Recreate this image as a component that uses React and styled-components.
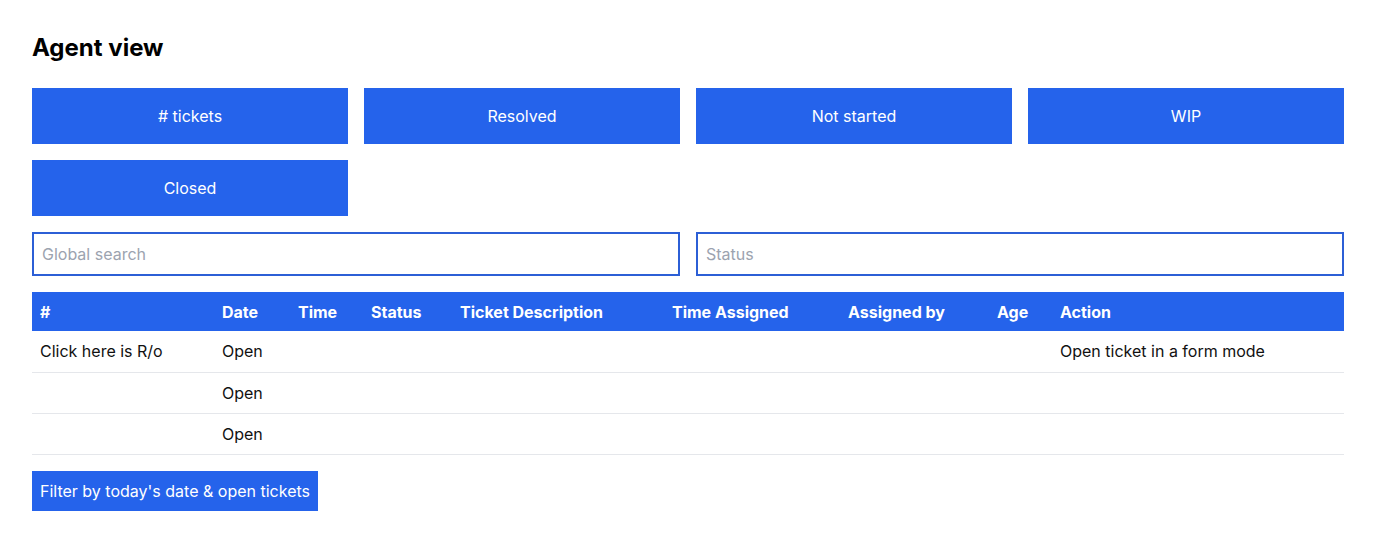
import React from 'react'
import styled, { createGlobalStyle } from 'styled-components'

const GlobalStyle = createGlobalStyle`
	body {
		margin: 0;
		background: #fff;
		font-family: Inter, "Liberation Sans", sans-serif;
		color: #111;
	}
	* { box-sizing: border-box; }
`

const stats = ['# tickets', 'Resolved', 'Not started', 'WIP', 'Closed']

const columns = [
	{ label: '#', width: 182 },
	{ label: 'Date', width: 76 },
	{ label: 'Time', width: 73 },
	{ label: 'Status', width: 89 },
	{ label: 'Ticket Description', width: 212 },
	{ label: 'Time Assigned', width: 176 },
	{ label: 'Assigned by', width: 149 },
	{ label: 'Age', width: 63 },
	{ label: 'Action', width: 292 },
]

const rows = [
	['Click here is R/o', 'Open', '', '', '', '', '', '', 'Open ticket in a form mode'],
	['', 'Open', '', '', '', '', '', '', ''],
	['', 'Open', '', '', '', '', '', '', ''],
]

export default function App() {
	return (
		<Page>
			<GlobalStyle />
			<Title>Agent view</Title>
			<StatGrid>
				{stats.map(s => (
					<StatButton key={s}>{s}</StatButton>
				))}
			</StatGrid>
			<Filters>
				<SearchInput placeholder="Global search" />
				<SearchInput placeholder="Status" />
			</Filters>
			<Table>
				<colgroup>
					{columns.map(c => (
						<col key={c.label} style={{ width: c.width }} />
					))}
				</colgroup>
				<thead>
					<tr>
						{columns.map(c => (
							<Th key={c.label}>{c.label}</Th>
						))}
					</tr>
				</thead>
				<tbody>
					{rows.map((r, i) => (
						<Tr key={i}>
							{r.map((cell, j) => (
								<Td key={j}>{cell}</Td>
							))}
						</Tr>
					))}
				</tbody>
			</Table>
			<ActionRow>
				<FilterButton>Filter by today's date &amp; open tickets</FilterButton>
			</ActionRow>
		</Page>
	)
}

const Page = styled.div`
	padding: 31px 32px 32px;
	display: flex;
	flex-direction: column;
	gap: 16px;
`

const Title = styled.h1`
	margin: 0 0 7px;
	font-size: 24px;
	font-weight: 700;
	line-height: 34px;
	color: #000;
`

const StatGrid = styled.div`
	display: grid;
	grid-template-columns: repeat(4, 1fr);
	gap: 16px;
`

const StatButton = styled.button`
	height: 56px;
	border: none;
	background: #2563eb;
	color: #fff;
	font-family: inherit;
	font-size: 16px;
	cursor: pointer;
`

const Filters = styled.div`
	display: grid;
	grid-template-columns: 1fr 1fr;
	gap: 16px;
`

const SearchInput = styled.input`
	height: 44px;
	border: 2px solid #2c5fd6;
	padding: 0 8px;
	font-family: inherit;
	font-size: 16px;
	color: #111;
	outline: none;

	&::placeholder {
		color: #9ca3af;
	}
`

const Table = styled.table`
	width: 100%;
	border-collapse: collapse;
	table-layout: fixed;
	font-size: 16px;
`

const Th = styled.th`
	background: #2563eb;
	color: #fff;
	font-weight: 700;
	text-align: left;
	height: 39px;
	padding: 0 8px;
`

const Tr = styled.tr`
	border-bottom: 1px solid #e5e7eb;
`

const Td = styled.td`
	height: 41px;
	padding: 0 8px;
	color: #111;
	white-space: nowrap;
`

const ActionRow = styled.div`
	display: flex;
`

const FilterButton = styled.button`
	height: 40px;
	padding: 0 8px;
	border: none;
	background: #2563eb;
	color: #fff;
	font-family: inherit;
	font-size: 16px;
	cursor: pointer;
`
